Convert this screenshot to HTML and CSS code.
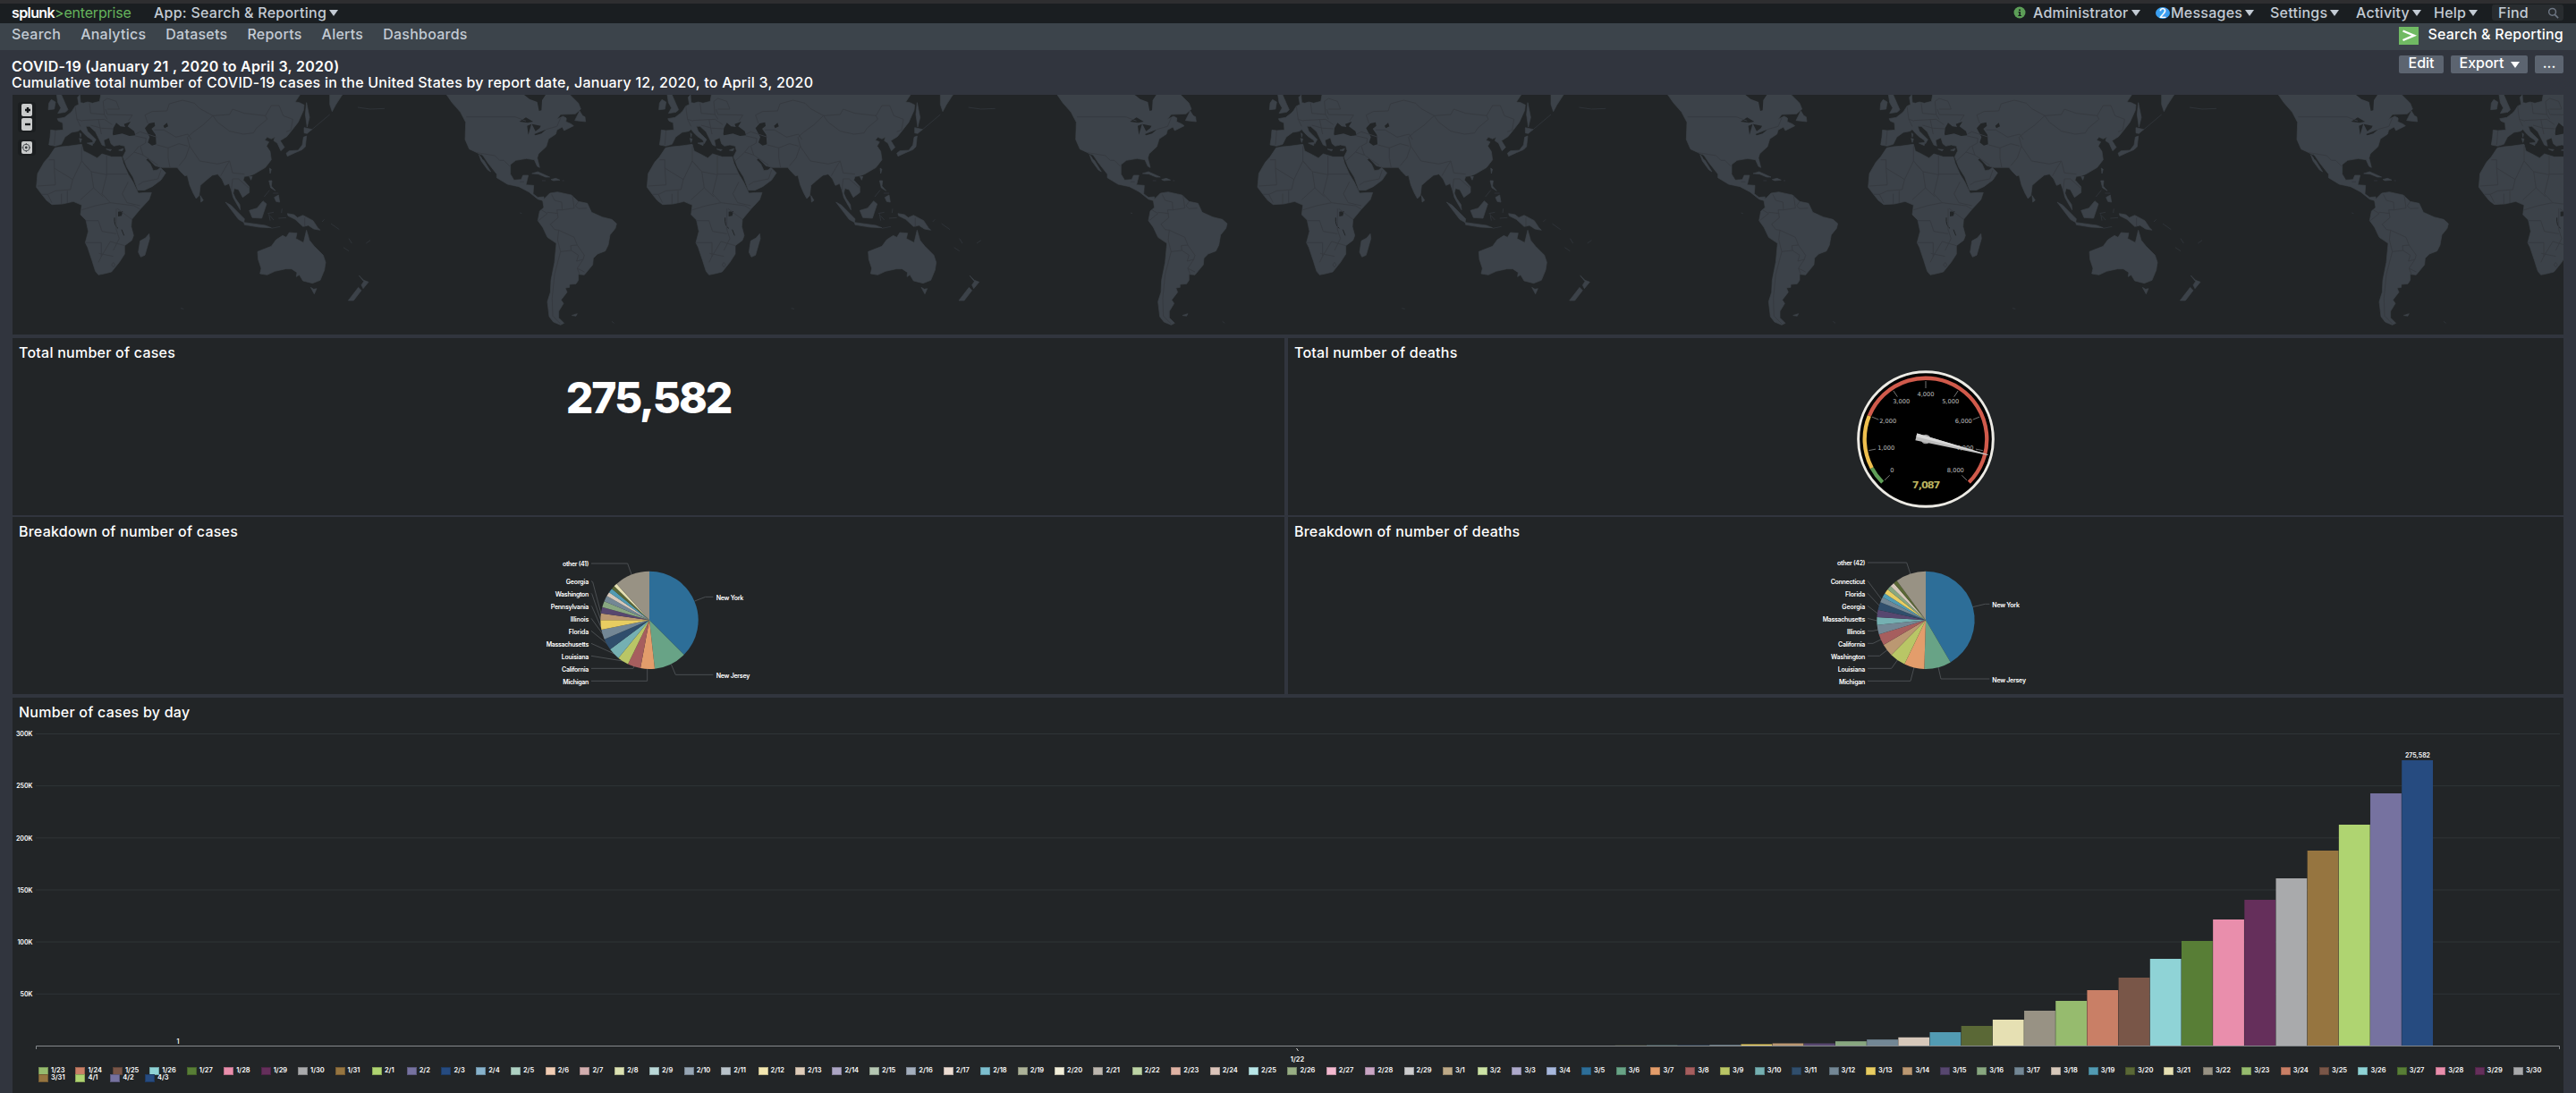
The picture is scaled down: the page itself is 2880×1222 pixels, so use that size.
FILE: index.html
```html
<!DOCTYPE html>
<html lang="en">
<head>
<meta charset="utf-8">
<title>COVID-19 | Search &amp; Reporting</title>
<link rel="stylesheet" href="styles.css">
</head>
<body>
<header class="topbar">
  <div class="brand"><b>splunk</b><span>&gt;enterprise</span></div>
  <div class="menu app-menu">App: Search &amp; Reporting<i class="caret"></i></div>
  <nav class="account">
    <svg class="health" viewBox="0 0 14 14"><circle cx="7" cy="7" r="6.5" fill="#5c9e57"/><path d="M6 3.4h2v1.7H6zM5.5 6h2.5v4h1v1H5.3v-1h1V7h-.8z" fill="#1a1e21"/></svg>
    <div class="menu m-admin">Administrator<i class="caret"></i></div>
    <div class="menu m-msg"><span class="badge">2</span>Messages<i class="caret"></i></div>
    <div class="menu m-set">Settings<i class="caret"></i></div>
    <div class="menu m-act">Activity<i class="caret"></i></div>
    <div class="menu m-help">Help<i class="caret"></i></div>
    <div class="find">Find<svg viewBox="0 0 14 14"><circle cx="6" cy="5.7" r="4.2" fill="none" stroke="#6d7683" stroke-width="1.6"/><path d="M9 9l4 4" stroke="#6d7683" stroke-width="1.8"/></svg></div>
  </nav>
</header>
<div class="appbar">
  <nav class="tabs"><a>Search</a><a>Analytics</a><a>Datasets</a><a>Reports</a><a>Alerts</a><a>Dashboards</a></nav>
  <div class="appname"><svg viewBox="0 0 22 20"><rect width="22" height="20" fill="#70ba63"/><path d="M4.5 4.5L17 9.7 4.5 15" fill="none" stroke="#fff" stroke-width="2.4"/></svg><span>Search &amp; Reporting</span></div>
</div>
<main class="dashboard">
  <div class="heading">
    <div>
      <h1>COVID-19 (January 21 , 2020 to April 3, 2020)</h1>
      <p>Cumulative total number of COVID-19 cases in the United States by report date, January 12, 2020, to April 3, 2020</p>
    </div>
    <div class="actions"><button class="b-edit">Edit</button><button class="b-export">Export<i class="caret"></i></button><button class="b-more">...</button></div>
  </div>

  <section class="panel map">
    <svg class="world" viewBox="12 18 8556 804">
      <defs>
        <g id="world">
          <g class="land">
            <path d="M308 18L304 40 280 46 264 42 250 46 240 44 238 18 230 26 234 50 222 56 212 72 204 80 186 94 162 98 166 106 180 112 182 136 156 138 140 136 138 160 134 186 156 190 176 184 188 160 210 144 232 140 240 134 250 146 262 158 280 170 284 182 292 168 276 152 264 140 258 124 270 124 290 142 298 158 312 186 322 190 318 170 336 162 342 182 352 190 370 186 388 190 392 206 382 226 396 262 416 294 432 338 454 338 480 326 510 304 526 280 508 262 498 270 484 272 474 250 460 236 466 230 490 256 512 262 564 262 576 276 590 290 598 288 606 320 618 348 628 366 638 356 642 322 660 306 682 288 700 284 714 300 724 322 738 316 746 338 752 362 764 384 776 404 774 386 760 366 752 348 756 332 770 336 784 362 806 346 806 326 786 304 790 292 806 290 822 284 860 262 880 236 876 208 864 190 872 176 858 170 866 160 880 166 892 160 888 172 900 180 912 206 924 194 910 172 932 158 950 136 970 110 988 70 990 52 974 44 960 42 976 18Z"/>
            <path d="M154 196L176 192 200 190 244 184 250 206 270 216 296 230 312 216 344 226 378 226 384 248 400 284 416 310 434 348 456 346 478 346 470 370 440 402 412 436 410 460 418 490 412 506 388 524 388 552 370 580 344 612 320 618 300 622 290 610 278 572 264 530 256 514 266 476 258 438 240 420 244 388 216 376 180 384 144 386 126 372 110 352 92 328 96 282 118 244 134 226Z"/>
            <path d="M470 484L472 500 456 556 442 562 434 546 440 508 458 498ZM160 18H176L190 50 198 68 190 76 164 80 174 62 164 44ZM142 34L156 42 152 66 132 68 134 46ZM642 356L652 372 644 378ZM726 378L744 388 790 434 788 446 770 436ZM788 446L860 456 880 464 840 462 790 454ZM806 406L832 398 852 374 864 384 848 432 816 430ZM872 306L882 306 880 324 894 340 878 330ZM890 362L904 354 908 378 896 376ZM874 264L880 268 876 282ZM806 292L816 292 812 304ZM930 214L940 206 970 204 984 186 988 160 998 156 994 192 984 202 960 212 934 224ZM990 128L1016 134 1000 148 990 146ZM998 44L1008 94 1000 126 994 84ZM1076 18H1118L1096 52 1084 74 1076 50ZM934 416L956 420 968 430 986 422 1020 440 1036 464 1044 472 1022 468 1004 456 986 460 960 436 936 424Z"/>
            <path d="M834 544L880 526 896 504 918 490 930 496 940 480 966 482 962 500 988 514 998 472 1008 506 1024 526 1054 556 1062 580 1058 606 1044 640 1018 650 986 642 974 622 964 628 966 614 948 602 928 602 892 610 866 622 842 618 846 600 836 570ZM1012 664L1022 670 1032 668 1024 686ZM1174 624L1190 640 1206 646 1188 668 1182 656 1190 644ZM1172 664L1182 674 1156 708 1138 708ZM236 164L244 166 240 178ZM238 146L242 150 240 160ZM262 180L282 178 280 188ZM326 200L344 202 340 206ZM368 204L384 198 380 206Z"/>
            <path d="M868 416L888 412M872 418L876 440M876 424L888 438M916 400L914 414M904 432L930 430M1050 444L1058 436M1080 450L1108 470M1140 500L1150 516M1122 530L1140 542M1198 516L1212 506M576 734L586 736M856 360L874 338M886 348L904 348M1170 60L1212 66 1260 64M880 466L910 460M1012 138L1076 84" class="isles"/>
          </g>
          <g class="sea">
            <path d="M348 150L350 130 360 112 374 124 390 126 386 116 408 108 398 124 420 140 424 154 404 156 380 148 350 154ZM470 114L488 110 490 122 478 132 492 152 494 184 480 188 466 178 472 160 456 130ZM366 410L382 408 378 424 366 426ZM518 122L530 112 534 124 522 130Z"/>
            <path d="M354 430Q352 456 366 466M378 470L386 490" class="river"/>
          </g>
          <path class="borders" d="M466 114L456 86 480 74 530 72 538 48 582 36 622 46 640 64 684 88 650 120 614 146 600 160M684 88L740 84 750 66 790 80 860 88 866 100 830 130 820 146 786 150 740 140 700 110 684 88M860 88L880 54 906 54 920 88 952 100 946 136 930 142M488 136L520 136 560 160 600 150 612 168M440 190L450 220 500 254M424 156L460 164 458 180 440 190M496 186L534 196 534 230 540 262M534 196L570 182 600 190M598 160L606 190 592 230 570 256M606 190L640 240 700 250 740 240 726 262 710 290M740 240L750 280 790 284M746 338L750 300 770 300 804 330M388 240L420 210 450 220M420 210L436 190M434 320L450 310 500 300 510 270M244 190V240L214 302 152 264V236H134M152 264L156 320 96 324M328 222V286L276 276 244 240M328 284H396M276 276L284 330 240 370M328 286L312 350 340 380 420 390M214 302L206 336 156 340 130 352M284 330L316 360M244 404L290 390 340 380M258 440H300L312 476 360 484M256 514H310V560L300 580M310 560L340 510 388 524M360 400V470L370 500 350 540M302 550L350 560M412 436L364 400M420 390L440 402M400 310L380 350 396 380 440 390M176 384V350M196 380V340M110 352L130 352 144 380M244 240L270 270M344 588L350 580 356 588 350 596ZM222 56L228 100 246 106M270 46L274 80 320 84M316 40L330 30 360 40 370 66 330 66M228 100L240 124M246 104L320 100 346 118M300 100L310 150M320 84L330 100M324 66L330 84 414 86 400 106M156 138L152 186M316 40L320 84M274 120L310 130 348 132M424 150L440 142 496 160M992 430V460"/>
          <g transform="translate(1410 0)">
            <g class="land">
              <path d="M58 18H472L500 46 508 66 490 82 440 84 428 100 448 90 460 96 458 108 476 116 484 122 452 138 446 126 428 136 424 150 400 166 392 192 366 216 362 230 370 262 362 258 352 236 326 232 290 238 272 252 272 284 284 304 308 302 314 288 332 288 324 320 350 322 348 350 364 362 384 360 384 374 364 368 334 344 300 326 262 318 226 296 226 284 196 246 180 222 160 212 134 200 120 168 122 110 104 76 76 44Z"/>
              <path d="M166 218L184 240 206 276 196 270 174 240ZM504 72L514 88 522 92 524 108 488 104ZM344 282L364 276 404 294 390 294 366 284ZM408 302L424 298 438 304 416 306ZM478 758L496 752 492 760Z"/>
              <path d="M380 372L404 348 430 344 476 354 500 376 530 382 544 412 580 428 612 436 628 450 624 466 606 488 600 522 590 542 564 552 550 566 548 588 520 622 500 620 500 640 492 652 470 654 470 664 456 666 462 680 442 706 450 718 434 744 434 766 452 784 440 790 416 780 402 762 396 712 406 680 408 640 420 580 426 516 396 496 380 462 364 440 370 408 384 396Z"/>
              <path class="isles" d="M378 306H390M446 306H452M304 414L310 416M612 778L620 784"/>
            </g>
            <path class="sea" d="M318 18H390L378 36 376 70 368 72 362 42 336 32ZM302 108L324 94 348 108 330 112ZM328 122L342 116 332 152ZM344 116L374 122 370 130 356 140ZM352 150L392 134 376 148 356 154ZM458 92L490 84 484 104 466 106ZM174 216L184 236 178 234Z"/>
            <path class="borders" d="M124 92H288L324 106M392 134L428 124 440 96M160 212L220 222 236 238 250 238 270 258M304 310L318 310M410 352L420 372 444 378 446 404 428 404 432 430 406 452 420 470 434 472 430 504 440 544 476 540 474 524 496 522 486 496 434 472M366 440L396 416 376 404M396 412L432 416M446 404L486 398 480 356M500 376L490 390 500 400 528 398M476 540L500 556 494 576 516 570 520 556 496 522M516 570L496 600 520 612M496 600L504 620M440 544L420 620 412 700 414 760 440 786"/>
          </g>
        </g>
      </defs>
      <use href="#world"/><use href="#world" x="2048"/><use href="#world" x="4096"/><use href="#world" x="6144"/><use href="#world" x="8192"/>
    </svg>
    <div class="zoomer">
      <div class="zgroup"><button><svg viewBox="0 0 12 14"><path d="M7 4v6M4 7h6" stroke="#15181a" stroke-width="2.4"/></svg></button><button><svg viewBox="0 0 12 14"><path d="M4 7h6" stroke="#15181a" stroke-width="2.4"/></svg></button></div>
      <div class="zgroup"><button><svg viewBox="0 0 12 14"><circle cx="5.3" cy="7" r="3.8" fill="none" stroke="#4a4e52"/><circle cx="5.3" cy="7" r="1.4" fill="#33373a"/><path d="M5.3 2v2M5.3 10v2M.5 7h2M8 7h2" stroke="#4a4e52"/></svg></button></div>
    </div>
  </section>

  <div class="row">
    <section class="panel"><h2>Total number of cases</h2><div class="single">275,582</div></section>
    <section class="panel"><h2>Total number of deaths</h2><svg class="gauge" id="gauge" viewBox="99 45 600 513"></svg></section>
  </div>
  <div class="row second">
    <section class="panel"><h2>Breakdown of number of cases</h2><svg class="pie pie-cases" id="pieCases" viewBox="120 750 750 468"></svg></section>
    <section class="panel"><h2>Breakdown of number of deaths</h2><svg class="pie pie-deaths" id="pieDeaths" viewBox="-21 30 840 468"></svg></section>
  </div>
  <section class="panel daily">
    <h2>Number of cases by day</h2>
    <svg class="columns" id="columns" viewBox="14 807 2852 382"></svg>
    <div class="legend" id="legend"></div>
  </section>
</main>
<script src="charts.js"></script>
</body>
</html>
```
FILE: styles.css
```css
* { box-sizing: border-box; }
body { margin: 0; width: 2880px; height: 1222px; overflow: hidden; background: #31353e; color: #fff; font-family: Inter, Roboto, sans-serif; font-size: 16px; font-weight: 500; letter-spacing: .24px; }
h1, h2, p { margin: 0; font-size: 16px; font-weight: 500; white-space: nowrap; }
button { border: 0; padding: 0; color: #fff; font: inherit; }
svg { display: block; }

.topbar { height: 26px; border-top: 4px solid #2e2e30; background: #1a1e21; padding: 0 14px 2px 13px; display: flex; align-items: center; color: #c3cbd4; line-height: 20px; white-space: nowrap; }
.brand { width: 159px; font-size: 16px; letter-spacing: -.2px; }
.brand b { color: #fff; font-weight: 600; letter-spacing: -.6px; }
.brand span { color: #65b35c; font-weight: 400; }
.menu { display: flex; align-items: center; }
.caret { width: 0; height: 0; border: 5px solid transparent; border-top: 7px solid currentColor; border-bottom: 0; margin-left: 3px; }
.account { margin-left: auto; display: flex; align-items: center; }
.health { width: 14px; height: 14px; margin-right: 8px; }
.m-admin { width: 137px; }
.m-msg { width: 128px; }
.m-set { width: 96px; }
.m-act { width: 87px; }
.m-help { width: 65px; }
.badge { width: 16px; height: 13px; margin-right: 1px; border-radius: 50%; background: #3c9ff0; color: #fff; font-size: 14px; line-height: 13px; text-align: center; }
.find { width: 80px; height: 18px; padding: 0 5px 0 7px; border-radius: 3px; background: #282c2f; display: flex; align-items: center; justify-content: space-between; }
.find svg { width: 13px; height: 13px; }

.appbar { height: 30px; padding: 0 14px 0 13px; background: #3c444b; display: flex; justify-content: space-between; line-height: 24px; color: #c3cbd4; }
.tabs { display: flex; gap: 22px; }
.appname { display: flex; color: #fff; }
.appname svg { width: 22px; height: 20px; margin: 4px 10px 0 0; }

.dashboard { padding: 0 14px; }
.heading { height: 50px; padding-top: 6px; display: flex; justify-content: space-between; }
.heading h1, .heading p { margin-left: -1px; }
.heading h1 { padding-top: 3px; height: 21px; line-height: 18px; font-weight: 600; letter-spacing: .3px; }
.heading p { line-height: 18px; }
.actions { display: flex; }
.actions button { height: 20px; border-radius: 2px; background: #5c6470; line-height: 17px; display: flex; justify-content: center; }
.actions .caret { align-self: center; margin-left: 7px; }
.b-edit { width: 50px; margin-right: 8px; }
.b-export { width: 86px; margin-right: 8px; }
.b-more { width: 32px; }

.panel { background: #222527; overflow: hidden; }
.panel h2 { padding: 6px 0 0 7px; height: 27px; line-height: 20px; }
.map { height: 268px; position: relative; }
.world { width: 2852px; height: 268px; }
.land { fill: #3c4249; stroke: #3c4249; stroke-width: 2; stroke-linejoin: round; }
.land .isles { fill: none; stroke-width: 3; opacity: .5; }
.sea { fill: #222527; }
.river { fill: none; stroke: #222527; stroke-width: 3; }
.borders { fill: none; stroke: #363a40; stroke-width: 3; stroke-linejoin: round; }
.zoomer { position: absolute; left: 6px; top: 8px; display: grid; gap: 8px; }
.zgroup { width: 20px; padding: 2px 4px; border-radius: 4px; background: #1b1e20; display: grid; gap: 2px; }
.zgroup button { width: 12px; height: 14px; border-radius: 2px; background: #c9cbcb; }

.row { margin-top: 4px; display: grid; grid-template-columns: 1422px 1426px; gap: 4px; height: 198px; }
.row.second { margin-top: 2px; }
.single { text-align: center; font-size: 48px; font-weight: 800; line-height: 60px; margin-top: 10px; letter-spacing: -2.1px; }
.gauge { width: 200px; height: 171px; margin: 0 auto; font-family: "DejaVu Sans", sans-serif; letter-spacing: 0; }
.gauge text { fill: #c0c0c0; font-size: 20px; text-anchor: middle; }
.gauge .reading { fill: #b9b25f; font-size: 34px; font-weight: 700; }
.pie { height: 156px; margin: 15px auto 0; letter-spacing: 0; }
.pie-cases { width: 250px; }
.pie-deaths { width: 280px; }
.pie text { fill: #fff; font-size: 21px; font-weight: 600; }
.pie polyline { fill: none; stroke: #4b4f52; stroke-width: 3; }

.daily { margin-top: 4px; height: 442px; letter-spacing: 0; }
.daily h2 { letter-spacing: .24px; }
.columns { width: 2852px; height: 382px; }
.columns text { fill: #fff; font-size: 7px; font-weight: 600; }
.legend { padding: 4px 0 0 29px; display: flex; flex-wrap: wrap; font-size: 7.5px; font-weight: 600; line-height: 8px; }
.legend div { height: 8px; display: flex; align-items: center; }
.legend i { width: 11px; height: 9px; flex: none; margin-right: 3px; border: 1px solid rgba(0,0,0,.22); }
```
FILE: charts.js
```javascript
const el = (id) => document.getElementById(id);
const palette = {
  blue: '#2d6e98', green: '#68a386', orange: '#e39d6b', red: '#a65e5e', lime: '#b9c666', teal: '#75b0b2',
  navy: '#304e6c', steel: '#738795', yellow: '#e8cd61', tan: '#bb9872', purple: '#57476f', sage: '#88a780',
  slate: '#738795', beige: '#d6c8ba', aqua: '#529bb3', olive: '#5a6836', cream: '#e6e0b3', taupe: '#989284'
};

// Pies: each slice is [colour, end angle], clockwise from the top.
function pie(id, cx, cy, slices, labels) {
  const r = 164;
  const at = (a) => [cx + r * Math.sin(a * Math.PI / 180), cy - r * Math.cos(a * Math.PI / 180)].map((v) => v.toFixed(1)).join(' ');
  let from = 0, out = '';
  for (const [, , , , line] of labels) out += `<polyline points="${line}"/>`;
  for (const [c, to] of slices) {
    out += `<path d="M${cx} ${cy}L${at(from)}A${r} ${r} 0 0 1 ${at(to)}Z" fill="${palette[c]}"/>`;
    from = to;
  }
  for (const [t, x, y, w] of labels) {
    out += `<text x="${x}" y="${y}" textLength="${w}" text-anchor="${x > cx ? 'start' : 'end'}">${t}</text>`;
  }
  el(id).innerHTML = out;
}
pie('pieCases', 498, 970, [['blue', 135], ['green', 173.7], ['orange', 190.5], ['red', 206], ['lime', 219.3], ['teal', 233.3], ['navy', 246.9], ['steel', 258.7], ['yellow', 270], ['tan', 278], ['purple', 285.6], ['sage', 292.8], ['slate', 299.6], ['beige', 304.7], ['aqua', 309.9], ['olive', 314], ['cream', 318], ['taupe', 360]], [
  ['New York', 722, 903, 92, '650,906 686,892 712,892'],
  ['New Jersey', 722, 1164, 113, '571,1118 586,1153 712,1153'],
  ['other (41)', 295, 788, 88, '303,780 425,780 438,816'],
  ['Georgia', 295, 848, 77, '303,839 308,842 336,948'],
  ['Washington', 295, 891, 113, '303,880 306,884 335,970'],
  ['Pennsylvania', 295, 933, 128, '303,922 306,926 337,996'],
  ['Illinois', 295, 975, 62, '303,964 341,1016'],
  ['Florida', 295, 1017, 68, '303,1006 357,1050'],
  ['Massachusetts', 295, 1058, 143, '303,1048 378,1082'],
  ['Louisiana', 295, 1100, 92, '303,1090 410,1107'],
  ['California', 295, 1143, 91, '303,1132 444,1132 447,1124'],
  ['Michigan', 295, 1185, 87, '303,1174 491,1174 491,1130']
]);
pie('pieDeaths', 399, 250, [['blue', 149.5], ['green', 181.7], ['orange', 205.8], ['lime', 224.8], ['tan', 239.6], ['red', 253.2], ['steel', 264.4], ['teal', 273.5], ['purple', 282.3], ['navy', 291.5], ['slate', 298], ['aqua', 303.2], ['yellow', 308.8], ['sage', 314], ['beige', 319.2], ['olive', 323.8], ['taupe', 360]], [
  ['New York', 622, 206, 92, '556,206 598,196 613,196'],
  ['New Jersey', 622, 459, 113, '441,408 450,447 613,447'],
  ['other (42)', 196, 66, 94, '204,57 335,57 348,96'],
  ['Connecticut', 196, 129, 116, '204,118 252,182'],
  ['Florida', 196, 171, 67, '204,160 244,202'],
  ['Georgia', 196, 213, 78, '204,202 238,228'],
  ['Massachusetts', 196, 255, 143, '204,244 236,252'],
  ['Illinois', 196, 297, 61, '204,286 222,286 240,282'],
  ['California', 196, 338, 91, '204,328 222,328 249,315'],
  ['Washington', 196, 381, 115, '204,370 244,370 270,350'],
  ['Louisiana', 196, 422, 92, '204,412 284,412 304,384'],
  ['Michigan', 196, 465, 88, '204,454 348,454 360,408']
]);

// Radial gauge, 0 to 8,000 over 270 degrees.
(function () {
  const cx = 399, cy = 303;
  const pt = (v, r) => { const a = (225 + v / 8000 * 270) * Math.PI / 180; return (cx + r * Math.sin(a)).toFixed(1) + ' ' + (cy - r * Math.cos(a)).toFixed(1); };
  const arc = (a, b, c) => `<path d="M${pt(a, 205)}A205 205 0 ${b - a > 5333 ? 1 : 0} 1 ${pt(b, 205)}" fill="none" stroke="${c}" stroke-width="13"/>`;
  let s = `<circle cx="${cx}" cy="${cy}" r="226" fill="#000" stroke="#eceae4" stroke-width="9"/>`;
  s += arc(0, 500, '#5f9e57') + arc(500, 2000, '#efbf4e') + arc(2000, 8000, '#d05a4b');
  for (let v = 0; v <= 8000; v += 1000) s += `<path d="M${pt(v, 171)}L${pt(v, 195)}" stroke="#8a8a8a" stroke-width="2.5"/>`;
  [['0', 286, 413], ['1,000', 266, 338], ['2,000', 272, 249], ['3,000', 317, 183], ['4,000', 399, 159], ['5,000', 482, 183], ['6,000', 526, 249], ['7,000', 531, 338], ['8,000', 499, 414]].forEach(([t, x, y]) => { s += `<text x="${x}" y="${y}">${t}</text>`; });
  s += `<circle cx="399" cy="303" r="16" fill="#999"/><g transform="rotate(14.2 399 303)"><path d="M366 291V315L614 304V302Z" fill="#bdbdbd"/><path d="M366 303H614V302L366 291Z" fill="#d8d8d8"/></g>`;
  s += '<text class="reading" x="401" y="468" textLength="95">7,087</text>';
  el('gauge').innerHTML = s;
})();

// Daily columns and their legend.
const days = [];
[[1, 23, 31], [2, 1, 29], [3, 1, 31], [4, 1, 3]].forEach(([m, a, b]) => { for (let d = a; d <= b; d++) days.push(m + '/' + d); });
const tail = ['#96bb6e', '#c97f66', '#795648', '#8fd3d6', '#587e36', '#e98eac', '#652f5b', '#a9aaac', '#967540', '#afd471', '#7672a0', '#264b80'];
const colours = [...tail,
  '#87b2cc', '#aed1c3', '#f1cdb4', '#d2aeaf', '#dce2b2', '#b9d8d8', '#97a6b5', '#b9c3ca', '#f3e7b0', '#deccb9', '#aca5c4', '#b5c7b3',
  '#a3aebd', '#ebdcd2', '#7dbfcf', '#acb298', '#f1eed9', '#bcb6ae', '#bdd4a5', '#dfb3a4', '#dbc4ba', '#b8e6e8', '#98ae84', '#f3b9d0',
  '#c9a5c4', '#ccccce', '#bda987', '#cce3a5', '#ada9cb', '#a7b8dd', ...Object.values(palette), ...tail];
el('legend').innerHTML = days.map((d, i) => {
  const [m, n] = d.split('/').map(Number);
  const w = n < 10 ? 38.75 : m > 1 && n >= 20 && n < 31 ? 43.4 : 41.45;
  return `<div style="width:${w}px"><i style="background:${colours[i]}"></i>${d}</div>`;
}).join('');
(function () {
  const base = 1169.5;
  let s = '';
  [300, 250, 200, 150, 100, 50].forEach((k, i) => {
    const y = 820.5 + i * 58.15;
    s += `<path d="M40 ${y.toFixed(1)}H2862" stroke="#2f3437"/><text x="36.5" y="${(y + 2.7).toFixed(1)}" text-anchor="end">${k}K</text>`;
  });
  const heights = [.3, .4, .6, .8, 1, 1.3, 2, 3, 3, 5.3, 7.3, 9.7, 15.5, 22.5, 29.5, 39.5, 50.5, 62.5, 76.5, 97.5, 117.5, 141.5, 163.5, 187.5, 218.5, 247.5, 282.5, 319.5];
  heights.forEach((h, k) => {
    const i = days.length - heights.length + k;
    const x = 2720 - (heights.length - k) * 35.18;
    s += `<rect x="${(x + .4).toFixed(2)}" y="${base - h}" width="34.8" height="${h}" fill="${colours[i]}"/>`;
  });
  s += `<path d="M40.5 1173V1169.5H2861.5V1173" fill="none" stroke="#85898c"/><path d="M1449.5 1172L1451.5 1175" stroke="#ccc"/>`;
  s += '<text x="199" y="1167" text-anchor="middle">1</text><text x="1450.5" y="1186.5" text-anchor="middle" style="font-size:7.5px">1/22</text><text x="2703" y="847" text-anchor="middle">275,582</text>';
  el('columns').innerHTML = s;
})();
```
